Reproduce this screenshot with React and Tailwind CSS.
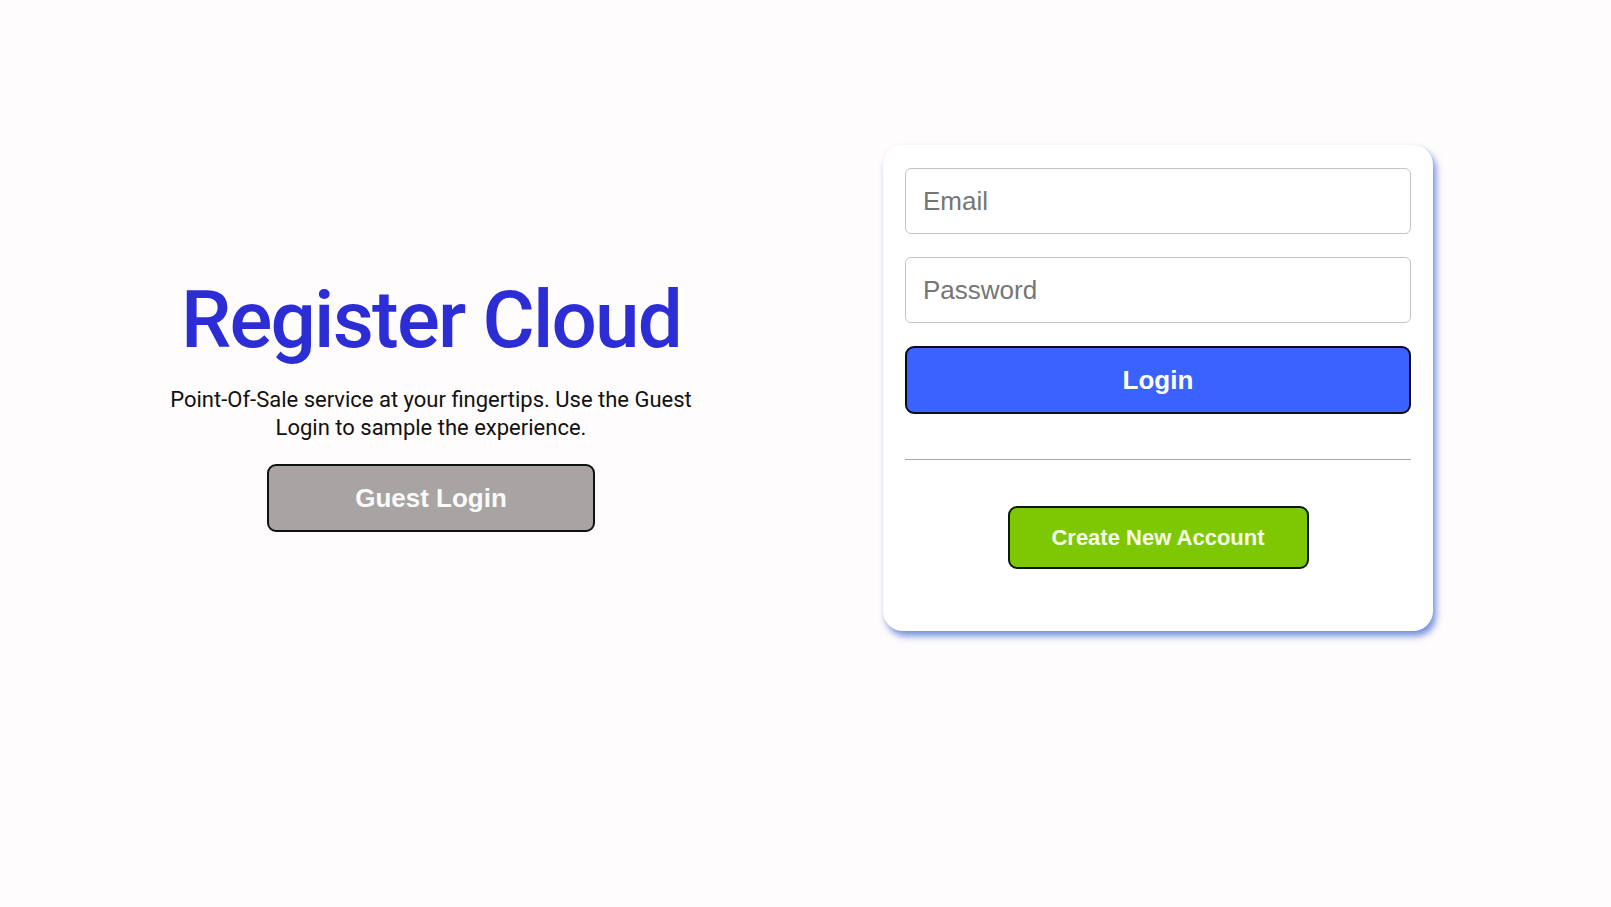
export default function App() {
  return (
    <div className="min-h-screen w-full bg-[#fefcfc]">
      <div className="flex items-start pt-[145px]">
        <div className="ml-[151px] mt-[133px] flex w-[560px] flex-col items-center">
          <h1 className="text-[80px] leading-[84px] font-medium text-[#2d2dd6] [font-family:Roboto,'Noto_Sans',sans-serif] tracking-[-1.8px]">
            Register Cloud
          </h1>
          <p className="mt-[24px] w-[545px] text-center text-[22px] leading-[27.5px] text-[#111] [font-family:Roboto,'Noto_Sans',sans-serif]">
            Point-Of-Sale service at your fingertips. Use the Guest Login to sample the experience.
          </p>
          <button className="mt-[23px] h-[68px] w-[328px] rounded-[9px] border-2 border-[#111] bg-[#a8a4a4] text-[26px] font-bold text-[#fafafa] [font-family:'Liberation_Sans',Arial,sans-serif]">
            Guest Login
          </button>
        </div>
        <div className="ml-[172px] flex w-[550px] flex-col rounded-[20px] bg-white px-[22px] pt-[23px] pb-[62px] shadow-[3px_5px_7px_rgba(70,105,210,0.75)]">
          <input
            type="text"
            placeholder="Email"
            className="h-[66px] w-full rounded-[6px] border border-[#c4c4c4] bg-white px-[17px] text-[26px] text-[#333] placeholder:text-[#767676] outline-none [font-family:'Liberation_Sans',Arial,sans-serif]"
          />
          <input
            type="password"
            placeholder="Password"
            className="mt-[23px] h-[66px] w-full rounded-[6px] border border-[#c4c4c4] bg-white px-[17px] text-[26px] text-[#333] placeholder:text-[#767676] outline-none [font-family:'Liberation_Sans',Arial,sans-serif]"
          />
          <button className="mt-[23px] h-[68px] w-full rounded-[9px] border-2 border-[#0a0a1a] bg-[#3a62ff] text-[26px] font-bold text-white [font-family:'Liberation_Sans',Arial,sans-serif]">
            Login
          </button>
          <div className="mt-[45px] h-px w-full bg-[#a8a8a8]" />
          <div className="mt-[46px] flex justify-center">
            <button className="h-[63px] w-[301px] rounded-[9px] border-2 border-[#0a1a0a] bg-[#7ec803] text-[22px] font-bold text-[#f8ffe8] [font-family:'Liberation_Sans',Arial,sans-serif]">
              Create New Account
            </button>
          </div>
        </div>
      </div>
    </div>
  );
}
